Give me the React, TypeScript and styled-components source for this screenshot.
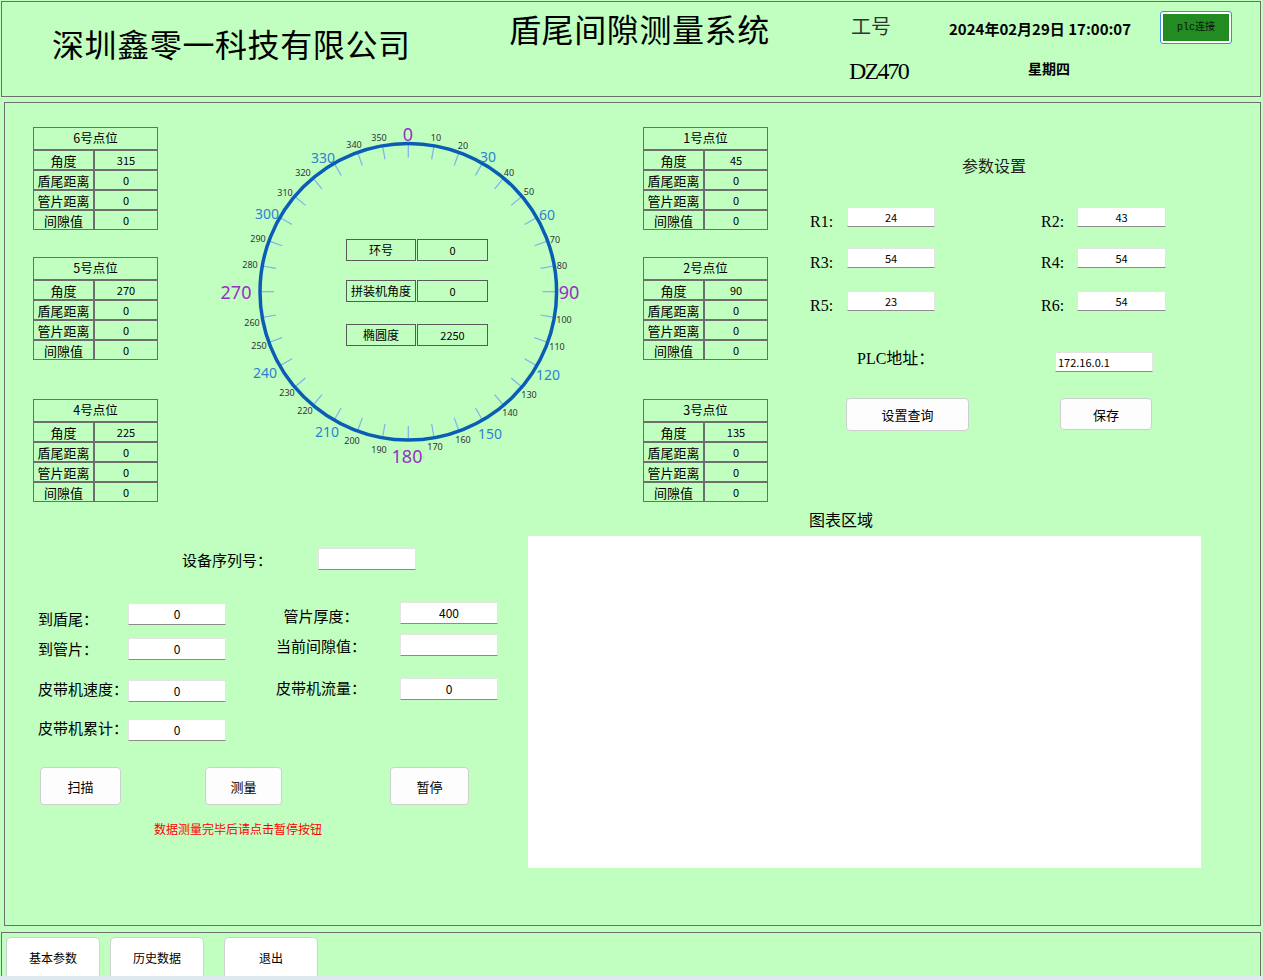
import React from 'react';
import styled, { createGlobalStyle } from 'styled-components';

const CJK = `"Noto Sans CJK SC", "Noto Sans", sans-serif`;
const SERIF = `"Liberation Serif", "Noto Sans CJK SC", serif`;
const LINE = '#6e6e6e';

const Global = createGlobalStyle`
  html, body { margin: 0; padding: 0; background: #c0ffc0; }
  body { font-family: ${CJK}; color: #000; overflow: hidden; }
  * { box-sizing: border-box; }
`;

const Page = styled.div`
  width: 1263px;
  height: 980px;
  overflow: hidden;
  display: flex;
  flex-direction: column;
  background: #c0ffc0;
`;

/* ---------- header ---------- */
const Header = styled.header`
  margin: 1px 0 0 1px;
  width: 1260px;
  height: 96px;
  border: 1px solid ${LINE};
  display: flex;
  align-items: flex-start;
`;
const Company = styled.h1`
  margin: 25px 0 0 50px;
  width: 457px;
  font: 400 32px/32px ${CJK};
  letter-spacing: 0.6px;
  color: #000;
`;
const SysTitle = styled.h2`
  margin: 10px 0 0 0;
  width: 340px;
  font: 400 32px/32px ${CJK};
  letter-spacing: 0.6px;
  color: #000;
`;
const IdBlock = styled.div`
  width: 100px;
  display: flex;
  flex-direction: column;
`;
const IdLabel = styled.div`
  margin: 14px 0 0 2px;
  font: 400 20px/20px ${CJK};
  color: #333;
`;
const IdValue = styled.div`
  margin-top: 23px;
  font: 400 24px/24px ${SERIF};
  letter-spacing: -1.8px;
  color: #000;
`;
const DateBlock = styled.div`
  width: 211px;
  display: flex;
  flex-direction: column;
`;
const DateText = styled.div`
  margin-top: 19px;
  font: 700 15px/15px ${CJK};
  white-space: nowrap;
`;
const WeekText = styled.div`
  margin: 25px 0 0 79px;
  font: 700 14px/14px ${CJK};
`;
const PlcButton = styled.button`
  margin-top: 9px;
  width: 72px;
  height: 33px;
  border: 1px solid #3a8ee6;
  border-radius: 3px;
  padding: 2px;
  background: #fff;
  display: flex;
  cursor: pointer;
`;
const PlcInner = styled.span`
  flex: 1;
  background: #228b22;
  display: flex;
  align-items: center;
  justify-content: center;
  font: 400 10px/10px "Liberation Mono", "Noto Sans CJK SC", monospace;
  color: #111;
`;

/* ---------- main panel ---------- */
const Main = styled.main`
  margin: 5px 0 0 4px;
  width: 1257px;
  height: 824px;
  border: 1px solid ${LINE};
  display: flex;
  flex-direction: column;
`;
const TopRow = styled.section`
  height: 405px;
  display: flex;
  align-items: flex-start;
`;
const TableCol = styled.div<{ $ml: number }>`
  margin-left: ${(p) => p.$ml}px;
  width: 125px;
  padding-top: 24px;
  display: flex;
  flex-direction: column;
`;
const TableBox = styled.div<{ $mt: number }>`
  margin-top: ${(p) => p.$mt}px;
  width: 125px;
  display: grid;
  grid-template-columns: 61px 64px;
  grid-template-rows: 23px repeat(4, 20px);
`;
const THead = styled.div`
  grid-column: 1 / -1;
  border: 1px solid ${LINE};
  display: flex;
  align-items: center;
  justify-content: center;
  font: 400 12.5px/1 ${CJK};
`;
const TLabel = styled.div`
  border: 1px solid ${LINE};
  display: flex;
  align-items: center;
  justify-content: center;
  font: 400 13px/1 ${CJK};
`;
const TValue = styled.div`
  border: 1px solid ${LINE};
  display: flex;
  align-items: center;
  justify-content: center;
  font: 400 11px/1 ${CJK};
`;

const PointTable = ({ title, angle, mt }: { title: string; angle: string; mt: number }) => (
  <TableBox $mt={mt}>
    <THead>{title}</THead>
    {[
      ['角度', angle],
      ['盾尾距离', '0'],
      ['管片距离', '0'],
      ['间隙值', '0'],
    ].map(([k, v]) => (
      <React.Fragment key={k}>
        <TLabel>{k}</TLabel>
        <TValue>{v}</TValue>
      </React.Fragment>
    ))}
  </TableBox>
);

/* ---------- dial ---------- */
const DialWrap = styled.div`
  position: relative;
  width: 485px;
  height: 405px;
`;
const DialSvg = styled.svg`
  position: absolute;
  left: 0;
  top: 0;
  overflow: visible;
`;
const FieldStack = styled.div`
  position: relative;
  padding: 136px 0 0 188px;
  display: flex;
  flex-direction: column;
`;
const FieldRow = styled.div<{ $mt: number }>`
  margin-top: ${(p) => p.$mt}px;
  display: flex;
  height: 22px;
`;
const FieldLabel = styled.div`
  width: 70px;
  border: 1px solid #5a5a5a;
  display: flex;
  align-items: center;
  justify-content: center;
  font: 400 12px/1 ${CJK};
`;
const FieldValue = styled.div`
  width: 71px;
  margin-left: 1px;
  border: 1px solid #5a5a5a;
  display: flex;
  align-items: center;
  justify-content: center;
  font: 400 11px/1 ${CJK};
`;

const CX = 408.3;
const CY = 291.7;
const R = 148.3;

type DialLabel = [string, number, number];
const LABELS: DialLabel[] = [
  ['0', 408, 134], ['10', 436, 137], ['20', 463, 145], ['30', 488, 156], ['40', 509, 172],
  ['50', 529, 191], ['60', 547, 214], ['70', 555, 239], ['80', 562, 265], ['90', 569, 292],
  ['100', 564, 319], ['110', 557, 346], ['120', 548, 374], ['130', 529, 394], ['140', 510, 412],
  ['150', 490, 433], ['160', 463, 439], ['170', 435, 446], ['180', 407, 456], ['190', 379, 449],
  ['200', 352, 440], ['210', 327, 431], ['220', 305, 410], ['230', 287, 392], ['240', 265, 372],
  ['250', 259, 345], ['260', 252, 322], ['270', 236, 292], ['280', 250, 264], ['290', 258, 238],
  ['300', 267, 213], ['310', 285, 192], ['320', 303, 172], ['330', 323, 157], ['340', 354, 144],
  ['350', 379, 137],
];

const Dial = () => {
  const ticks = Array.from({ length: 36 }, (_, i) => {
    const a = (i * 10 * Math.PI) / 180;
    const s = Math.sin(a);
    const c = Math.cos(a);
    return (
      <line
        key={i}
        x1={CX + (R + 1) * s}
        y1={CY - (R + 1) * c}
        x2={CX + (R - 14) * s}
        y2={CY - (R - 14) * c}
        stroke="#7fb0ea"
        strokeWidth={1.2}
      />
    );
  });
  return (
    <DialSvg width={485} height={405} viewBox="158 103 485 405">
      {ticks}
      <circle cx={CX} cy={CY} r={R} fill="none" stroke="#0b5cb5" strokeWidth={3.5} />
      {LABELS.map(([t, x, y]) => {
        const v = Number(t);
        const major = v % 90 === 0;
        const mid = !major && v % 30 === 0;
        return (
          <text
            key={t}
            x={x}
            y={y}
            textAnchor="middle"
            dominantBaseline="central"
            fontFamily='"Noto Sans", sans-serif'
            fontSize={major ? 18 : mid ? 14 : 9}
            fill={major ? '#9a2fc6' : mid ? '#2f7fd0' : '#333'}
          >
            {t}
          </text>
        );
      })}
    </DialSvg>
  );
};

/* ---------- params ---------- */
const Params = styled.div`
  flex: 1;
  display: flex;
  flex-direction: column;
`;
const ParamTitle = styled.div`
  margin: 54px 0 0 194px;
  font: 400 16px/16px ${CJK};
  color: #222;
`;
const ParamBody = styled.div`
  padding-left: 42px;
  display: flex;
  flex-direction: column;
`;
const RRow = styled.div<{ $mt: number }>`
  margin-top: ${(p) => p.$mt}px;
  height: 20px;
  display: flex;
  align-items: flex-start;
`;
const RLabel = styled.div<{ $w: number; $ml?: number }>`
  width: ${(p) => p.$w}px;
  margin-left: ${(p) => p.$ml ?? 0}px;
  padding-top: 5px;
  font: 400 16px/20px ${SERIF};
`;
const Input = styled.div<{ $w: number; $align?: string }>`
  width: ${(p) => p.$w}px;
  height: 20px;
  background: #fff;
  border: 1px solid #e4e4e4;
  border-bottom: 1px solid #8c8c8c;
  display: flex;
  align-items: center;
  justify-content: ${(p) => p.$align ?? 'center'};
  padding: 0 2px;
  font: 400 11px/1 ${CJK};
`;
const PlcRow = styled.div`
  margin: 41px 0 0 47px;
  height: 20px;
  display: flex;
  align-items: flex-start;
`;
const PlcLabel = styled.div`
  width: 198px;
  margin-top: -3px;
  font: 400 16px/20px ${SERIF};
`;
const BtnRow = styled.div<{ $mt: number; $ml?: number }>`
  margin-top: ${(p) => p.$mt}px;
  margin-left: ${(p) => p.$ml ?? 0}px;
  display: flex;
  align-items: flex-start;
`;
const Button = styled.button<{ $w: number; $h: number; $ml: number }>`
  width: ${(p) => p.$w}px;
  height: ${(p) => p.$h}px;
  margin-left: ${(p) => p.$ml}px;
  background: #fdfdfd;
  border: 1px solid #cfcfcf;
  border-radius: 4px;
  font: 400 13px/1 ${CJK};
  color: #000;
  padding: 0;
  cursor: pointer;
`;

/* ---------- bottom ---------- */
const BottomRow = styled.section`
  flex: 1;
  display: flex;
  align-items: flex-start;
`;
const FormCol = styled.div`
  width: 523px;
  display: flex;
  flex-direction: column;
`;
const SerialRow = styled.div`
  margin: 40px 0 0 177px;
  display: flex;
  align-items: center;
`;
const FormRow = styled.div<{ $mt: number }>`
  margin-top: ${(p) => p.$mt}px;
  display: flex;
  align-items: flex-start;
`;
const Pair = styled.div<{ $mt: number; $ml: number }>`
  margin-top: ${(p) => p.$mt}px;
  margin-left: ${(p) => p.$ml}px;
  display: flex;
  align-items: center;
`;
const FormLabel = styled.div<{ $w: number; $dy: number; $center?: boolean }>`
  width: ${(p) => p.$w}px;
  transform: translateY(${(p) => p.$dy}px);
  font: 400 15px/20px ${CJK};
  white-space: nowrap;
  text-align: ${(p) => (p.$center ? 'center' : 'left')};
  padding-right: ${(p) => (p.$center ? 22 : 0)}px;
`;
const FormInput = styled.div`
  width: 98px;
  height: 22px;
  background: #fff;
  border: 1px solid #e4e4e4;
  border-bottom: 1px solid #8c8c8c;
  display: flex;
  align-items: center;
  justify-content: center;
  font: 400 12px/1 ${CJK};
`;
const Note = styled.div`
  margin: 16px 0 0 149px;
  font: 400 12px/16px ${CJK};
  color: #ff0000;
`;
const ChartCol = styled.div`
  width: 673px;
  display: flex;
  flex-direction: column;
`;
const ChartTitle = styled.div`
  margin: 3px 0 0 281px;
  font: 400 16px/16px ${CJK};
`;
const ChartBox = styled.div`
  margin-top: 9px;
  width: 673px;
  height: 332px;
  background: #fff;
`;

/* ---------- footer ---------- */
const Footer = styled.footer`
  margin: 6px 0 0 1px;
  width: 1260px;
  height: 44px;
  border: 1px solid ${LINE};
  border-bottom: none;
  overflow: hidden;
  display: flex;
  align-items: flex-start;
  padding-top: 4px;
`;
const TabButton = styled.button<{ $ml: number }>`
  margin-left: ${(p) => p.$ml}px;
  width: 94px;
  height: 42px;
  flex: none;
  background: #fff;
  border: 1px solid #d0d0d0;
  border-radius: 5px;
  font: 400 12px/1 ${CJK};
  color: #000;
  padding: 0;
  cursor: pointer;
`;
const BottomStrip = styled.div`
  height: 4px;
  background: #dde9ee;
`;

const formRows: { mt: number; left: [string, string, number, number]; right?: [string, string, number, number] }[] = [
  { mt: 32, left: ['到盾尾：', '0', 1, 5], right: ['管片厚度：', '400', 0, 3] },
  { mt: 9, left: ['到管片：', '0', 4, 0], right: ['当前间隙值：', '', 0, 1] },
  { mt: 18, left: ['皮带机速度：', '0', 2, -2], right: ['皮带机流量：', '0', 0, -1] },
  { mt: 17, left: ['皮带机累计：', '0', 0, -2] },
];

export default function App() {
  return (
    <Page>
      <Global />
      <Header>
        <Company>深圳鑫零一科技有限公司</Company>
        <SysTitle>盾尾间隙测量系统</SysTitle>
        <IdBlock>
          <IdLabel>工号</IdLabel>
          <IdValue>DZ470</IdValue>
        </IdBlock>
        <DateBlock>
          <DateText>2024年02月29日 17:00:07</DateText>
          <WeekText>星期四</WeekText>
        </DateBlock>
        <PlcButton>
          <PlcInner>plc连接</PlcInner>
        </PlcButton>
      </Header>

      <Main>
        <TopRow>
          <TableCol $ml={28}>
            <PointTable title="6号点位" angle="315" mt={0} />
            <PointTable title="5号点位" angle="270" mt={27} />
            <PointTable title="4号点位" angle="225" mt={39} />
          </TableCol>
          <DialWrap>
            <Dial />
            <FieldStack>
              <FieldRow $mt={0}>
                <FieldLabel>环号</FieldLabel>
                <FieldValue>0</FieldValue>
              </FieldRow>
              <FieldRow $mt={19}>
                <FieldLabel>拼装机角度</FieldLabel>
                <FieldValue>0</FieldValue>
              </FieldRow>
              <FieldRow $mt={22}>
                <FieldLabel>椭圆度</FieldLabel>
                <FieldValue>2250</FieldValue>
              </FieldRow>
            </FieldStack>
          </DialWrap>
          <TableCol $ml={0}>
            <PointTable title="1号点位" angle="45" mt={0} />
            <PointTable title="2号点位" angle="90" mt={27} />
            <PointTable title="3号点位" angle="135" mt={39} />
          </TableCol>
          <Params>
            <ParamTitle>参数设置</ParamTitle>
            <ParamBody>
              <RRow $mt={34}>
                <RLabel $w={37}>R1:</RLabel>
                <Input $w={88}>24</Input>
                <RLabel $w={36} $ml={106}>R2:</RLabel>
                <Input $w={89}>43</Input>
              </RRow>
              <RRow $mt={21}>
                <RLabel $w={37}>R3:</RLabel>
                <Input $w={88}>54</Input>
                <RLabel $w={36} $ml={106}>R4:</RLabel>
                <Input $w={89}>54</Input>
              </RRow>
              <RRow $mt={23}>
                <RLabel $w={37}>R5:</RLabel>
                <Input $w={88}>23</Input>
                <RLabel $w={36} $ml={106}>R6:</RLabel>
                <Input $w={89}>54</Input>
              </RRow>
              <PlcRow>
                <PlcLabel>PLC地址：</PlcLabel>
                <Input $w={98} $align="flex-start">172.16.0.1</Input>
              </PlcRow>
              <BtnRow $mt={26}>
                <Button $w={123} $h={33} $ml={36}>设置查询</Button>
                <Button $w={92} $h={32} $ml={91}>保存</Button>
              </BtnRow>
            </ParamBody>
          </Params>
        </TopRow>

        <BottomRow>
          <FormCol>
            <SerialRow>
              <FormLabel $w={136} $dy={1}>设备序列号：</FormLabel>
              <FormInput />
            </SerialRow>
            {formRows.map((r, i) => (
              <FormRow key={i} $mt={r.mt}>
                <Pair $mt={r.left[2]} $ml={33}>
                  <FormLabel $w={90} $dy={r.left[3]}>{r.left[0]}</FormLabel>
                  <FormInput>{r.left[1]}</FormInput>
                </Pair>
                {r.right && (
                  <Pair $mt={r.right[2]} $ml={38}>
                    <FormLabel $w={136} $dy={r.right[3]} $center>{r.right[0]}</FormLabel>
                    <FormInput>{r.right[1]}</FormInput>
                  </Pair>
                )}
              </FormRow>
            ))}
            <BtnRow $mt={26}>
              <Button $w={81} $h={38} $ml={35}>扫描</Button>
              <Button $w={77} $h={38} $ml={84}>测量</Button>
              <Button $w={79} $h={38} $ml={108}>暂停</Button>
            </BtnRow>
            <Note>数据测量完毕后请点击暂停按钮</Note>
          </FormCol>
          <ChartCol>
            <ChartTitle>图表区域</ChartTitle>
            <ChartBox />
          </ChartCol>
        </BottomRow>
      </Main>

      <Footer>
        <TabButton $ml={4}>基本参数</TabButton>
        <TabButton $ml={10}>历史数据</TabButton>
        <TabButton $ml={20}>退出</TabButton>
      </Footer>
      <BottomStrip />
    </Page>
  );
}
